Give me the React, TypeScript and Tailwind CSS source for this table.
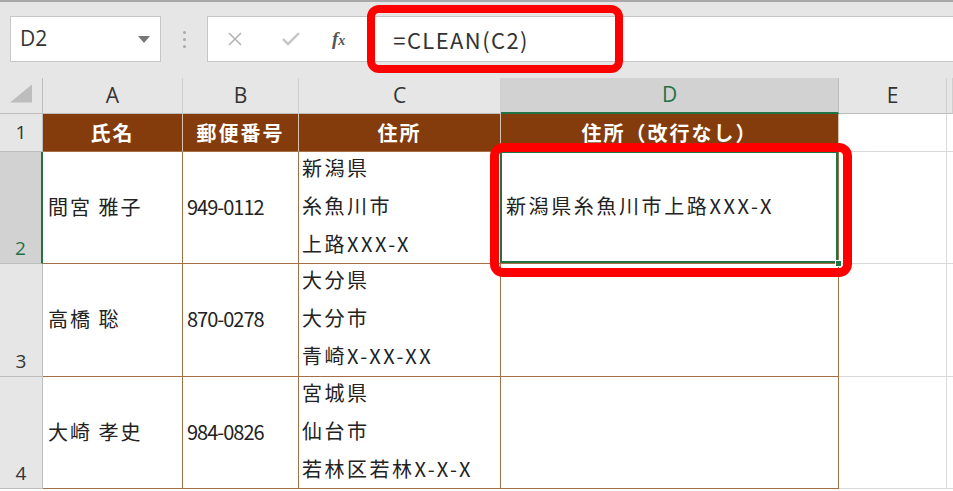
import React from 'react';

const jp = { fontFamily: '"Noto Sans CJK JP", "Noto Sans", sans-serif' };
const ui = { fontFamily: '"Open Sans", "Noto Sans", sans-serif' };

const rows = [
  { n: '2', name: '間宮 雅子', zip: '949-0112', addr: ['新潟県', '糸魚川市', '上路XXX-X'], clean: '新潟県糸魚川市上路XXX-X' },
  { n: '3', name: '高橋 聡', zip: '870-0278', addr: ['大分県', '大分市', '青崎X-XX-XX'], clean: '' },
  { n: '4', name: '大崎 孝史', zip: '984-0826', addr: ['宮城県', '仙台市', '若林区若林X-X-X'], clean: '' },
];

const FormulaBar = () => (
  <div className="h-[78px] bg-[#e6e6e6] border-t-2 border-[#a8a8a8] flex items-start pt-[14px]">
    <div className="ml-[10px] w-[151px] h-[46px] bg-white border border-[#c6c6c6] flex items-center justify-between pl-[9px] pr-[10px]">
      <span className="text-[21px] text-[#333]" style={ui}>D2</span>
      <svg width="12" height="7" viewBox="0 0 12 7"><path d="M0 0h12L6 7z" fill="#777" /></svg>
    </div>
    <div className="w-[46px] h-[46px] flex flex-col items-center justify-center gap-[4px]">
      <span className="w-[3px] h-[3px] rounded-full bg-[#aaa]" />
      <span className="w-[3px] h-[3px] rounded-full bg-[#aaa]" />
      <span className="w-[3px] h-[3px] rounded-full bg-[#aaa]" />
    </div>
    <div className="flex-1 h-[46px] bg-white border border-[#c6c6c6] border-r-0 flex items-center">
      <svg className="ml-[20px]" width="14" height="14" viewBox="0 0 14 14">
        <path d="M1 1l12 12M13 1L1 13" stroke="#b4b4b4" strokeWidth="1.6" />
      </svg>
      <svg className="ml-[40px]" width="18" height="14" viewBox="0 0 18 14">
        <path d="M1 7l5 5L17 1" stroke="#c4c4c4" strokeWidth="2.4" fill="none" />
      </svg>
      <span className="ml-[32px] text-[19px] italic font-bold text-[#555]" style={{ fontFamily: '"Liberation Serif", serif' }}>
        f<span className="text-[14px]">x</span>
      </span>
      <span className="ml-[48px] text-[22px] text-[#333] tracking-[1.4px]" style={jp}>
        =CLEAN(C2)
      </span>
    </div>
  </div>
);

export default function App() {
  const brown = 'border-[#a46f45]';
  const gray = 'border-[#d9d9d9]';
  return (
    <div className="relative w-[953px] h-[491px] overflow-hidden bg-white" style={jp}>
      <FormulaBar />
      <div className="grid grid-cols-[43px_140px_116px_202px_338px_108px_1fr] grid-rows-[36px_38px_112px_113px_112px] text-[20px] tracking-[2px] text-[#222]">
        {/* column headers */}
        <div className="bg-[#e6e6e6] border-r border-b border-[#bdbdbd] flex items-end justify-end p-[10px]">
          <svg width="23" height="19" viewBox="0 0 23 19"><path d="M23 0v19H0z" fill="#bdbdbd" /></svg>
        </div>
        {['A', 'B', 'C', 'D', 'E', ''].map((c) =>
          c === 'D' ? (
            <div key={c} className="bg-[#d2d2d2] border-r border-[#bdbdbd] border-b-2 border-b-[#217346] flex items-center justify-center text-[#217346] text-[21px] tracking-normal" style={ui}>
              {c}
            </div>
          ) : (
            <div key={c || 'x'} className="bg-[#e6e6e6] border-r border-b border-[#cfcfcf] border-b-[#bdbdbd] flex items-center justify-center text-[#333] text-[21px] tracking-normal" style={ui}>
              {c}
            </div>
          )
        )}

        {/* row 1 */}
        <div className="bg-[#e6e6e6] border-r border-b border-[#bdbdbd] flex items-center justify-center text-[#333] text-[19px] tracking-normal" style={ui}>1</div>
        {['氏名', '郵便番号', '住所', '住所（改行なし）'].map((h) => (
          <div key={h} className="bg-[#843c0c] border-r border-b border-[#d8c2ae] border-b-[#a46f45] flex items-center justify-center text-white font-bold tracking-[2px]">
            {h}
          </div>
        ))}
        <div className={`border-r border-b ${gray}`} />
        <div className={`border-b ${gray}`} />

        {rows.map((r, i) => (
          <React.Fragment key={r.n}>
            <div
              className={
                (i === 0
                  ? 'bg-[#d2d2d2] border-b border-[#bdbdbd] border-r-2 border-r-[#217346] text-[#217346]'
                  : 'bg-[#e6e6e6] border-r border-b border-[#bdbdbd] text-[#333]') +
                ' flex items-end justify-center pb-[1px] text-[19px] tracking-normal'
              }
              style={ui}
            >
              {r.n}
            </div>
            <div className={`border-r border-b ${brown} flex items-center pl-[5px] pb-[2px]`}>{r.name}</div>
            <div className={`border-r border-b ${brown} flex items-center pl-[4px] pb-[2px] tracking-[-1px]`}>{r.zip}</div>
            <div className={`border-r border-b ${brown} flex flex-col justify-center pl-[3px] leading-[38px] pb-[4px] tracking-[2.5px]`}>
              {r.addr.map((a) => (
                <span key={a}>{a}</span>
              ))}
            </div>
            {i === 0 ? (
              <div className={`relative border-r border-b ${brown}`}>
                <div className="absolute -left-[1px] -top-[1px] right-0 bottom-0 border-2 border-[#217346] flex items-center pl-[4px] pb-[2px] tracking-[2.6px]">
                  {r.clean}
                </div>
                <div className="absolute -right-[4px] -bottom-[4px] w-[7px] h-[7px] bg-[#217346] border border-white" />
              </div>
            ) : (
              <div className={`border-r border-b ${brown}`} />
            )}
            <div className={`border-r border-b ${gray}`} />
            <div className={`border-b ${gray}`} />
          </React.Fragment>
        ))}
      </div>

      {/* red callouts */}
      <div className="absolute left-[367px] top-[5px] w-[256px] h-[68px] border-[8px] border-[#ff0000] rounded-[12px]" />
      <div className="absolute left-[490px] top-[143px] w-[362px] h-[134px] border-[9px] border-[#ff0000] rounded-[13px]" />
    </div>
  );
}
